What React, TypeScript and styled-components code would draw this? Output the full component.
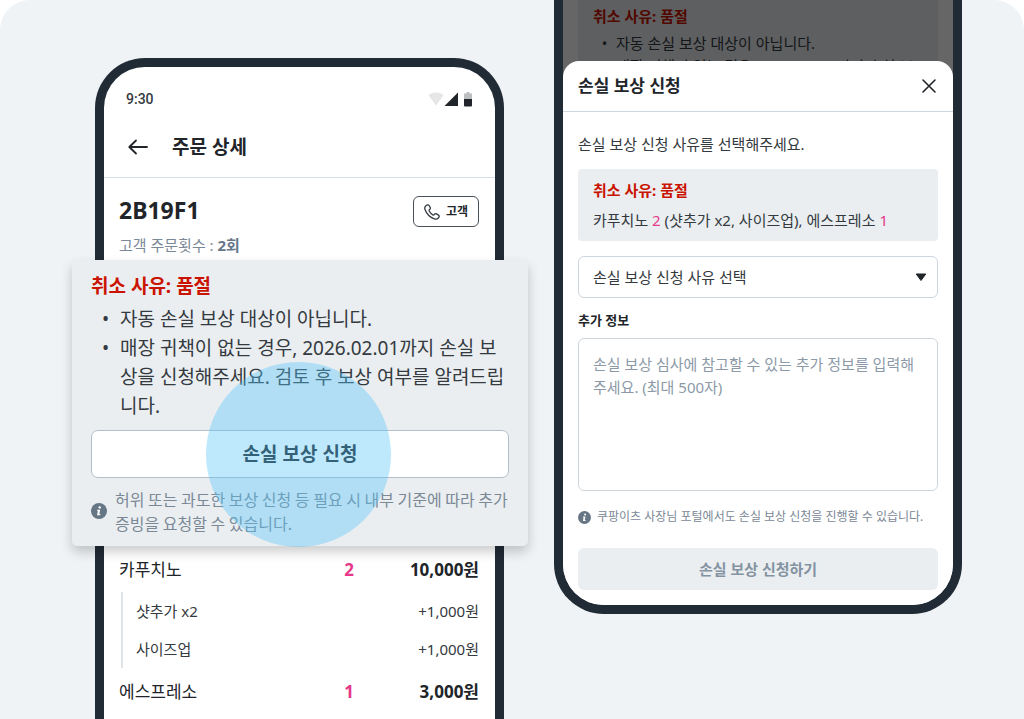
import React from "react";
import styled, { createGlobalStyle, css } from "styled-components";

const color = {
  stage: "#eff3f6",
  frame: "#212b36",
  ink: "#212529",
  body: "#343a40",
  muted: "#7b8896",
  placeholder: "#8c9aa8",
  panel: "#eaeef1",
  line: "#ced6dd",
  danger: "#cb1400",
  accent: "#e5398a",
};

const GlobalStyle = createGlobalStyle`
  *, *::before, *::after { box-sizing: border-box; }
  body {
    margin: 0;
    background: #fff;
    color: ${color.ink};
    font-family: "Noto Sans", "Noto Sans CJK KR", sans-serif;
    font-size: 15px;
    line-height: 23px;
  }
  h1, h2, h3, p, ul { margin: 0; padding: 0; }
  ul { list-style: none; }
  button, select, textarea { font: inherit; color: inherit; }
  button { cursor: pointer; padding: 0; }
`;

const Stage = styled.main`
  display: grid;
  grid-template-columns: 409fr 408fr;
  column-gap: 50px;
  min-height: 100vh;
  padding: 0 62px 0 95px;
  overflow: hidden;
  background: ${color.stage};
  border-radius: 30px 30px 0 0;
`;

const Phone = styled.section<{ $cut: "top" | "bottom" }>`
  background: #fff;
  border: 9px solid ${color.frame};
  ${({ $cut }) =>
    $cut === "bottom"
      ? css`
          margin-top: 58px;
          border-bottom: 0;
          border-radius: 50px 50px 0 0;
        `
      : css`
          align-self: start;
          border-top: 0;
          border-radius: 0 0 50px 50px;
        `}
`;

const StatusBar = styled.div`
  display: flex;
  justify-content: space-between;
  align-items: center;
  padding: 21px 23px 7px 22px;
  color: ${color.body};
  font: 500 14px/22px Roboto, sans-serif;
`;

const AppBar = styled.header`
  display: flex;
  align-items: center;
  gap: 24px;
  height: 61px;
  padding: 0 24px;
  border-bottom: 1px solid #d6dde3;
`;

const IconButton = styled.button`
  display: flex;
  border: 0;
  background: none;
`;

const Heading = styled.h1<{ $size: number }>`
  font-size: ${({ $size }) => $size}px;
  line-height: 28px;
  font-weight: 700;
`;

const Summary = styled.div`
  padding: 18px 16px 3px 15px;
`;

const SummaryRow = styled.div`
  display: flex;
  justify-content: space-between;
  align-items: flex-start;
`;

const OrderCount = styled.p`
  margin-top: 7px;
  color: ${color.muted};
  strong { color: #65788a; }
`;

const CallButton = styled.button`
  display: flex;
  align-items: center;
  justify-content: center;
  gap: 6px;
  width: 66px;
  height: 31px;
  background: #fff;
  border: 1px solid #495057;
  border-radius: 6px;
  font-size: 12px;
  font-weight: 700;
`;

const Callout = styled.article`
  position: relative;
  margin: 0 -33px 0 -32px;
  padding: 12px 19px 11px;
  background: ${color.panel};
  border-radius: 5px;
  box-shadow: 0 6px 12px rgba(0, 0, 0, 0.2);
`;

const Reason = styled.h2<{ $size: number; $line: number }>`
  color: ${color.danger};
  font-size: ${({ $size }) => $size}px;
  line-height: ${({ $line }) => $line}px;
  font-weight: 700;
`;

const Bullets = styled.ul<{ $size: number; $line: number; $indent: number }>`
  margin-top: 4px;
  font-size: ${({ $size }) => $size}px;
  line-height: ${({ $line }) => $line}px;
  color: ${color.body};
  li {
    display: grid;
    grid-template-columns: ${({ $indent }) => $indent}px 1fr;
  }
  li::before {
    content: "•";
    text-align: center;
  }
`;

const ClaimButton = styled.button`
  display: block;
  width: 100%;
  height: 48px;
  margin-top: 9px;
  background: #fff;
  border: 1px solid #b3bfca;
  border-radius: 7px;
  font-size: 19px;
  font-weight: 700;
`;

const Note = styled.p<{ $large?: boolean }>`
  display: flex;
  align-items: center;
  color: ${color.muted};
  svg { flex: none; }
  ${({ $large }) =>
    $large
      ? css`
          gap: 8px;
          margin-top: 9px;
          font: 16px/24px "Noto Sans CJK KR", sans-serif;
        `
      : css`
          gap: 6px;
          margin-top: 17px;
          font-size: 12px;
          line-height: 18px;
        `}
`;

const TapSpot = styled.span`
  position: absolute;
  left: calc(50% - 94px);
  bottom: -1px;
  width: 185px;
  height: 185px;
  border-radius: 50%;
  background: rgba(84, 197, 250, 0.38);
  pointer-events: none;
`;

const Items = styled.ul`
  display: grid;
  gap: 11px;
  padding: 11px 16px 12px 15px;
`;

const ItemRow = styled.div`
  display: grid;
  grid-template-columns: 1fr 20px 120px;
  font-size: 17px;
  line-height: 26px;
  color: ${color.ink};
`;

const Quantity = styled.strong`
  color: ${color.accent};
  text-align: center;
`;

const Price = styled.strong`
  text-align: right;
`;

const Options = styled.ul`
  margin: 9px 0 0 2px;
  padding-left: 13px;
  border-left: 2px solid #dfe4e9;
  line-height: 38px;
  color: ${color.body};
  li {
    display: flex;
    justify-content: space-between;
  }
`;

const Behind = styled.div`
  height: 77px;
  overflow: hidden;
  position: relative;
  padding: 0 15px;
  &::after {
    content: "";
    position: absolute;
    inset: 0;
    background: rgba(0, 0, 0, 0.6);
  }
`;

const BehindPanel = styled.div`
  padding: 5px 15px;
  background: ${color.panel};
`;

const Sheet = styled.div`
  position: relative;
  margin-top: -16px;
  background: #fff;
  border-radius: 16px 16px 41px 41px;
`;

const SheetHeader = styled.header`
  display: flex;
  justify-content: space-between;
  align-items: center;
  height: 51px;
  padding: 0 17px 0 15px;
  border-bottom: 1px solid ${color.line};
`;

const Form = styled.form`
  padding: 21px 15px 15px;
`;

const Intro = styled.p`
  line-height: 22px;
  color: ${color.body};
`;

const ReasonPanel = styled.div`
  margin-top: 14px;
  padding: 6px 15px;
  background: ${color.panel};
  border-radius: 4px;
  line-height: 30px;
  color: ${color.body};
  em {
    font-style: normal;
    color: ${color.accent};
  }
`;

const SelectWrap = styled.div`
  position: relative;
  margin-top: 15px;
  svg {
    position: absolute;
    right: 11px;
    top: 17px;
    pointer-events: none;
  }
`;

const fieldBox = css`
  display: block;
  width: 100%;
  background: #fff;
  border: 1px solid ${color.line};
  border-radius: 6px;
`;

const Select = styled.select`
  ${fieldBox}
  appearance: none;
  height: 42px;
  padding: 0 14px;
  color: ${color.body};
`;

const Label = styled.label`
  display: block;
  margin-top: 12px;
  font-size: 13px;
  line-height: 20px;
  font-weight: 700;
`;

const TextArea = styled.textarea`
  ${fieldBox}
  height: 153px;
  margin-top: 8px;
  padding: 14px;
  resize: none;
  &::placeholder {
    color: ${color.placeholder};
    opacity: 1;
  }
`;

const SubmitButton = styled.button`
  display: block;
  width: 100%;
  height: 42px;
  margin-top: 22px;
  border: 0;
  border-radius: 6px;
  background: ${color.panel};
  color: #8493a1;
  font-weight: 700;
`;

const StatusIcons = () => (
  <svg width="44" height="16" viewBox="0 0 44 16" aria-hidden="true">
    <path d="M8 14.5 0.4 4.2C2.5 2.5 5.1 1.5 8 1.5s5.500 1 7.600 2.700z" fill="#e6e6e6" />
    <path d="M30 1.500V15H16.500z" fill="#212529" />
    <path d="M38.500 1h3v1.500H44V8h-8V2.500h2.500z" fill="#bcbec0" />
    <path d="M36 8h8v6.500q0 1-1 1h-6q-1 0-1-1z" fill="#212529" />
  </svg>
);

const BackIcon = () => (
  <svg width="20" height="16" viewBox="0 0 20 16" fill="none" stroke="#212529" strokeWidth="1.800" strokeLinecap="round" strokeLinejoin="round" aria-hidden="true">
    <path d="M19 8H1.500M8 1.500 1.300 8 8 14.500" />
  </svg>
);

const PhoneIcon = () => (
  <svg width="16" height="16" viewBox="0 0 16 16" fill="none" stroke="#343a40" strokeWidth="1.300" strokeLinejoin="round" aria-hidden="true">
    <path d="M2.200 1.500C3.200.7 4.400.5 5.100 1.500L6.200 3.500C6.700 4.500 6.200 5.200 5.400 5.800 4.900 6.200 5 6.700 5.300 7.300 6.200 8.900 7.200 9.900 8.700 10.800 9.300 11.100 9.800 11.100 10.200 10.600 10.900 9.700 11.600 9.400 12.500 9.900L14.500 11.100C15.500 11.800 15.300 12.900 14.500 13.900 13.500 15.100 12 15.500 10.300 14.900 6 13.400 2.700 10 1 5.500.4 3.900.9 2.500 2.200 1.500z" />
  </svg>
);

const CloseIcon = () => (
  <svg width="14" height="14" viewBox="0 0 14 14" fill="none" stroke="#212529" strokeWidth="1.600" strokeLinecap="round" aria-hidden="true">
    <path d="M1 1l12 12M13 1 1 13" />
  </svg>
);

const InfoIcon = ({ size }: { size: number }) => (
  <svg width={size} height={size} viewBox="0 0 16 16" aria-hidden="true">
    <circle cx="8" cy="8" r="8" fill="#667685" />
    <circle cx="8.700" cy="4.400" r="1.200" fill="#fff" />
    <path d="M6.300 6.700h2.900L8.300 11h1.100l-.2 1.200H6L6.900 7.900H6.100z" fill="#fff" />
  </svg>
);

const items = [
  {
    name: "카푸치노",
    quantity: 2,
    price: "10,000원",
    options: [
      { name: "샷추가 x2", price: "+1,000원" },
      { name: "사이즈업", price: "+1,000원" },
    ],
  },
  { name: "에스프레소", quantity: 1, price: "3,000원", options: [] },
];

const notices = [
  "자동 손실 보상 대상이 아닙니다.",
  "매장 귀책이 없는 경우, 2026.02.01까지 손실 보상을 신청해주세요. 검토 후 보상 여부를 알려드립니다.",
];

const NoticeList = ({ size, line, indent }: { size: number; line: number; indent: number }) => (
  <Bullets $size={size} $line={line} $indent={indent}>
    {notices.map((text) => (
      <li key={text}>
        <span>{text}</span>
      </li>
    ))}
  </Bullets>
);

const OrderPhone = () => (
  <Phone $cut="bottom">
    <StatusBar>
      <span>9:30</span>
      <StatusIcons />
    </StatusBar>
    <AppBar>
      <IconButton type="button" aria-label="뒤로">
        <BackIcon />
      </IconButton>
      <Heading $size={19}>주문 상세</Heading>
    </AppBar>
    <Summary>
      <SummaryRow>
        <Heading as="h2" $size={23}>2B19F1</Heading>
        <CallButton type="button">
          <PhoneIcon />
          고객
        </CallButton>
      </SummaryRow>
      <OrderCount>
        고객 주문횟수 : <strong>2회</strong>
      </OrderCount>
    </Summary>
    <Callout>
      <Reason $size={19} $line={29}>취소 사유: 품절</Reason>
      <NoticeList size={19} line={29} indent={29} />
      <ClaimButton type="button">손실 보상 신청</ClaimButton>
      <Note $large>
        <InfoIcon size={16} />
        <span>허위 또는 과도한 보상 신청 등 필요 시 내부 기준에 따라 추가 증빙을 요청할 수 있습니다.</span>
      </Note>
      <TapSpot />
    </Callout>
    <Items>
      {items.map((item) => (
        <li key={item.name}>
          <ItemRow>
            <span>{item.name}</span>
            <Quantity>{item.quantity}</Quantity>
            <Price>{item.price}</Price>
          </ItemRow>
          {item.options.length > 0 && (
            <Options>
              {item.options.map((option) => (
                <li key={option.name}>
                  <span>{option.name}</span>
                  <span>{option.price}</span>
                </li>
              ))}
            </Options>
          )}
        </li>
      ))}
    </Items>
  </Phone>
);

const ClaimPhone = () => (
  <Phone $cut="top">
    <Behind aria-hidden="true">
      <BehindPanel>
        <Reason as="p" $size={15} $line={23}>취소 사유: 품절</Reason>
        <NoticeList size={15} line={23} indent={23} />
      </BehindPanel>
    </Behind>
    <Sheet role="dialog" aria-labelledby="claim-title">
      <SheetHeader>
        <Heading as="h2" id="claim-title" $size={17}>손실 보상 신청</Heading>
        <IconButton type="button" aria-label="닫기">
          <CloseIcon />
        </IconButton>
      </SheetHeader>
      <Form onSubmit={(event) => event.preventDefault()}>
        <Intro>손실 보상 신청 사유를 선택해주세요.</Intro>
        <ReasonPanel>
          <Reason as="h3" $size={15} $line={30}>취소 사유: 품절</Reason>
          <p>
            카푸치노 <em>2</em> (샷추가 x2, 사이즈업), 에스프레소 <em>1</em>
          </p>
        </ReasonPanel>
        <SelectWrap>
          <Select aria-label="손실 보상 신청 사유" defaultValue="">
            <option value="">손실 보상 신청 사유 선택</option>
          </Select>
          <svg width="12" height="9" viewBox="0 0 12 9" aria-hidden="true">
            <path d="M1.200 1h9.600L6 7.500z" fill="#212529" stroke="#212529" strokeLinejoin="round" />
          </svg>
        </SelectWrap>
        <Label htmlFor="claim-detail">추가 정보</Label>
        <TextArea
          id="claim-detail"
          maxLength={500}
          placeholder="손실 보상 심사에 참고할 수 있는 추가 정보를 입력해주세요. (최대 500자)"
        />
        <Note>
          <InfoIcon size={13} />
          <span>쿠팡이츠 사장님 포털에서도 손실 보상 신청을 진행할 수 있습니다.</span>
        </Note>
        <SubmitButton type="submit">손실 보상 신청하기</SubmitButton>
      </Form>
    </Sheet>
  </Phone>
);

export default function App() {
  return (
    <>
      <GlobalStyle />
      <Stage>
        <OrderPhone />
        <ClaimPhone />
      </Stage>
    </>
  );
}
